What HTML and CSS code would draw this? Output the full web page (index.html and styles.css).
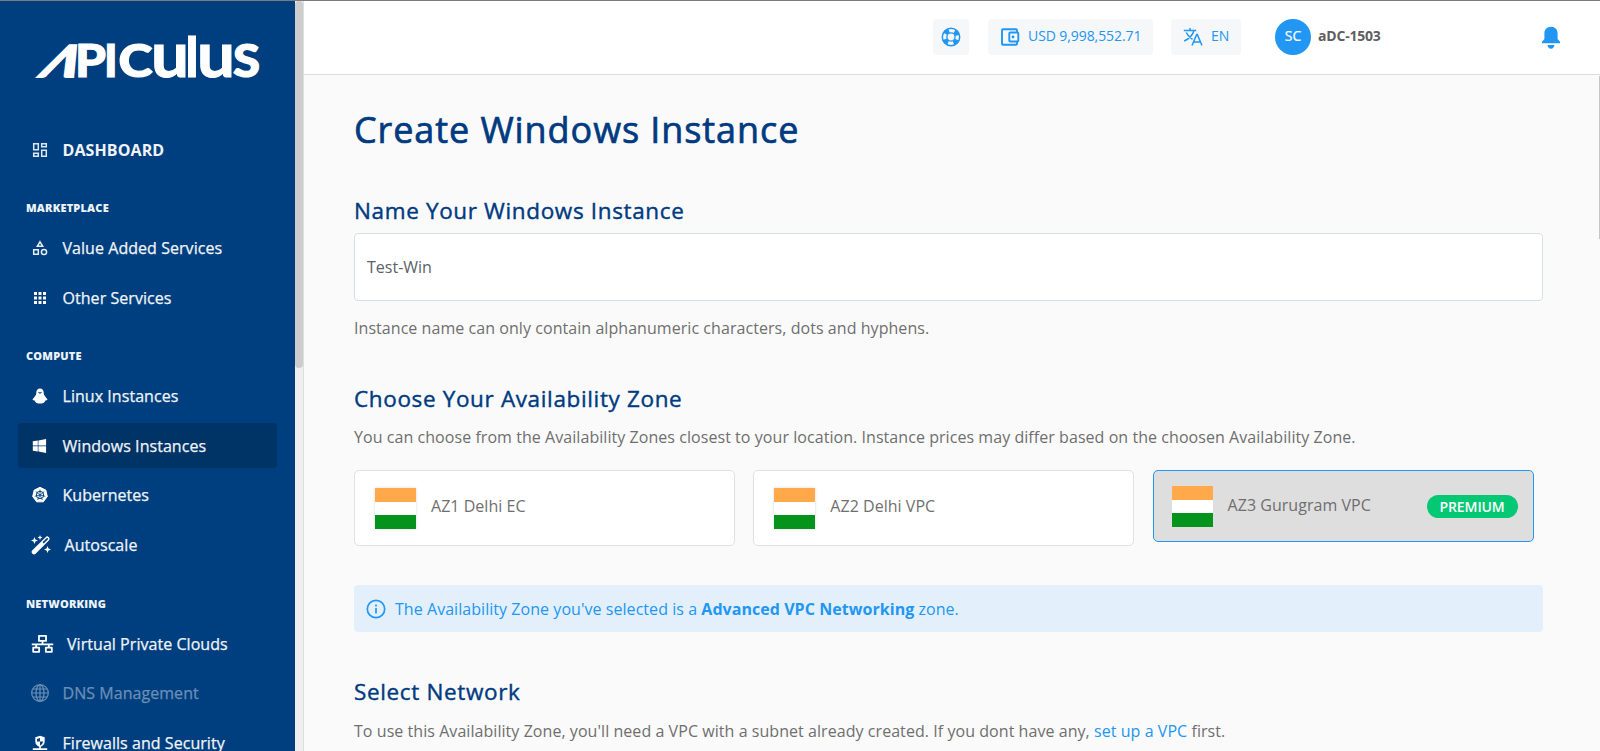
FILE: index.html
```html
<!DOCTYPE html>
<html lang="en">
<head>
<meta charset="utf-8">
<title>Create Windows Instance</title>
<link rel="stylesheet" href="styles.css">
</head>
<body>
<div class="app">
  <aside class="sidebar">
    <svg class="logo" viewBox="0 0 230 50" role="img" aria-label="Apiculus">
      <g fill="#fff" stroke="#fff" font-family="Lato, sans-serif">
        <text transform="translate(1.500 45.500) skewX(-29)" font-size="44" font-weight="900" stroke-width="1.800" textLength="35" lengthAdjust="spacingAndGlyphs">Λ</text>
        <text x="39" y="45.500" font-size="45" font-weight="900" stroke-width="1" textLength="31" lengthAdjust="spacingAndGlyphs">P</text>
        <text x="68" y="45.500" font-size="45" font-weight="900" stroke-width="1">I</text>
        <text x="82.500" y="45.500" font-size="45" font-weight="900" stroke-width="1.200" textLength="34" lengthAdjust="spacingAndGlyphs">C</text>
        <text x="115" y="45.500" font-size="63" font-weight="700" stroke-width="1" textLength="38" lengthAdjust="spacingAndGlyphs">u</text>
        <text x="149" y="45.500" font-size="56" font-weight="700" stroke-width="1">l</text>
        <text x="161" y="45.500" font-size="63" font-weight="700" stroke-width="1" textLength="38" lengthAdjust="spacingAndGlyphs">u</text>
        <text x="197" y="45.500" font-size="45" font-weight="900" stroke-width="1.200" textLength="27" lengthAdjust="spacingAndGlyphs">S</text>
      </g>
    </svg>
    <nav class="nav">
      <a class="item item-strong"><span class="ico"><svg width="16" height="16" viewBox="0 0 16 16" fill="none" stroke="#dfe8f2" stroke-width="1.5"><path d="M1.7 1.7h4.6v6H1.7zM9.7 1.7h4.6v3H9.7zM1.7 11.2h4.6v3H1.7zM9.7 8.2h4.6v6H9.7z"/></svg></span>DASHBOARD</a>
      <h4 class="group">MARKETPLACE</h4>
      <a class="item"><span class="ico"><svg width="16" height="16" viewBox="0 0 16 16" fill="none" stroke="#e6edf5" stroke-width="1.5"><path d="M8 1.8 10.7 6.300H5.300zM1.700 9.700h4.600v4.600H1.700z"/><circle cx="12" cy="12" r="2.600"/></svg></span>Value Added Services</a>
      <a class="item"><span class="ico"><svg width="16" height="16" viewBox="0 0 16 16" fill="#fff"><path d="M2 2h3v3H2zM6.500 2h3v3h-3zM11 2h3v3h-3zM2 6.500h3v3H2zM6.500 6.500h3v3h-3zM11 6.500h3v3h-3zM2 11h3v3H2zM6.500 11h3v3h-3zM11 11h3v3h-3z"/></svg></span>Other Services</a>
      <h4 class="group">COMPUTE</h4>
      <a class="item"><span class="ico"><svg width="16" height="16" viewBox="0 0 16 16"><path fill="#fff" d="M8 .5C5.700.5 4.300 2.200 4.300 4.500c0 2-.5 2.700-1.500 4L.7 11.200c-.5.700.2 1.100 1.500 1L3.500 14c.9 1.200 2.300 1.500 4.500 1.500s3.600-.3 4.500-1.500l1.300-1.800c1.300.1 2-.3 1.500-1l-2.100-2.700c-1-1.300-1.500-2-1.500-4C11.700 2.200 10.300.5 8 .5z"/><path fill="#003f7f" d="M5.800 4.200h4.400L8.700 5.600H7.300z"/></svg></span>Linux Instances</a>
      <a class="item item-active"><span class="ico"><svg width="16" height="16" viewBox="0 0 16 16" fill="#fff"><path d="M.8 3.300 5.800 2.500v5.100h-5zM6.400 2.400 14.100 1v6.600H6.400zM.8 8.300h5v5.200l-5-.8zM6.400 8.300h7.700V15l-7.700-1.400z"/></svg></span>Windows Instances</a>
      <a class="item"><span class="ico"><svg width="18" height="18" viewBox="0 0 18 18"><path fill="#fff" d="M9 1.300 14.800 4.100 16.300 10.500 12.300 15.800H5.700L1.700 10.500 3.200 4.100z" stroke="#fff" stroke-linejoin="round"/><g fill="none" stroke="#003f7f"><circle cx="9" cy="9" r="3.700"/><path stroke-width=".8" d="M9 3.500V9M4.700 5.600 9 9l4.300-3.400M3.700 10.300 9 9l5.300 1.300M6.600 14 9 9l2.400 5"/></g></svg></span>Kubernetes</a>
      <a class="item item-wand"><span class="ico"><svg width="20" height="20" viewBox="0 0 20 20"><path d="M3 17 16.200 3.800" stroke="#fff" stroke-width="4.600" stroke-linecap="round"/><path d="M12.600 7.400 16.200 3.800" stroke="#003f7f" stroke-width="1.700" stroke-linecap="round"/><path fill="#fff" d="M3.500 2 4.500 4.500 7 5.500 4.500 6.500 3.500 9 2.500 6.500 0 5.500 2.500 4.500zM9 0l.7 1.800 1.800.7-1.800.7L9 5l-.7-1.800-1.800-.7 1.800-.7zM16.500 11l1 2.500 2.500 1-2.500 1-1 2.500-1-2.500-2.500-1 2.500-1z"/></svg></span>Autoscale</a>
      <h4 class="group">NETWORKING</h4>
      <a class="item item-vpc"><span class="ico"><svg width="23" height="20" viewBox="0 0 24 20" fill="none" stroke="#fff" stroke-width="1.900" stroke-linejoin="round"><path d="M8.300 1.500h7.400v5.300H8.300zM2.300 13.700h6.200v4.500H2.300zM15.500 13.700h6.200v4.500h-6.200zM12 7v3.300M.8 10.300h22.400M5.400 10.500v3M18.600 10.500v3"/></svg></span>Virtual Private Clouds</a>
      <a class="item item-off"><span class="ico"><svg width="18" height="20" viewBox="0 0 18 20" fill="none" stroke="currentColor" stroke-width="1.200"><circle cx="9" cy="10" r="8.300"/><ellipse cx="9" cy="10" rx="4" ry="8.300"/><path d="M9 1.700v16.600M.7 10h16.600M1.700 6h14.600M1.700 14h14.600"/></svg></span>DNS Management</a>
      <a class="item"><span class="ico"><svg width="16" height="20" viewBox="0 0 16 20"><path fill="#fff" d="M8 2.800 12.700 4.200v4.300c0 3-2 4.600-4.700 5.700-2.700-1.100-4.700-2.700-4.700-5.700V4.200zM7.200 14h1.600v1.200h6.400v1.800H.8v-1.800h6.400z"/><path fill="#003f7f" d="M8 5v3.500h3c0 1.800-1.300 3-3 3.900V8.500H5V6z"/></svg></span>Firewalls and Security</a>
    </nav>
  </aside>
  <div class="scroll"><div class="thumb"></div></div>
  <section class="page">
    <header class="top">
      <div class="chip chip-help"><svg width="20" height="20" viewBox="0 0 20 20" fill="none" stroke="#2196f3"><circle cx="10" cy="10" r="8.700" stroke-width="1.500"/><circle cx="10" cy="10" r="6.500" stroke-width="4.500" stroke-dasharray="4.600 5.610" stroke-dashoffset="-2.800"/><circle cx="10" cy="10" r="4.100" stroke-width="1.300"/></svg></div>
      <div class="chip chip-wallet"><svg width="20" height="20" viewBox="0 0 20 20" fill="none" stroke="#2196f3" stroke-width="1.900" stroke-linejoin="round"><path d="M17 5V3.200a1 1 0 0 0-1-1H3a1 1 0 0 0-1 1v13.600a1 1 0 0 0 1 1h13a1 1 0 0 0 1-1V15"/><rect x="9.300" y="5.500" width="9" height="9" rx=".8"/><circle cx="13" cy="10" r="1.400" fill="#2196f3" stroke="none"/></svg><span>USD 9,998,552.71</span></div>
      <div class="chip chip-lang"><svg width="20" height="20" viewBox="0 0 20 20" fill="none" stroke="#2196f3" stroke-width="1.500"><path d="M.8 3.500h12.400M7 1v2.500M11 3.500C9.800 8 6 11.800 1.200 14M3.200 5.500C4.500 8.500 7 10.500 9.500 12.300M9 18.500l4.700-11h.6l4.700 11M10.700 14.900h6.600"/></svg><span>EN</span></div>
      <div class="avatar">SC</div>
      <div class="user">aDC-1503</div>
      <svg class="bell" width="20" height="24" viewBox="0 0 20 24" fill="#2196f3"><path d="M10 .8c4 0 6.600 2.800 6.600 6.700v5.600L19 15.800v1.400H1v-1.400l2.400-2.700V7.500C3.400 3.600 6 .8 10 .8zM6.600 19h6.800c0 2-1.300 3.700-3.400 3.700S6.600 21 6.600 19z"/></svg>
    </header>
    <main class="main">
      <h1>Create Windows Instance</h1>
      <h2 class="h-name">Name Your Windows Instance</h2>
      <div class="input">Test-Win</div>
      <p class="hint">Instance name can only contain alphanumeric characters, dots and hyphens.</p>
      <h2 class="h-zone">Choose Your Availability Zone</h2>
      <p class="desc">You can choose from the Availability Zones closest to your location. Instance prices may differ based on the choosen Availability Zone.</p>
      <div class="zones">
        <div class="zone"><div class="flag"></div><span>AZ1 Delhi EC</span></div>
        <div class="zone"><div class="flag"></div><span>AZ2 Delhi VPC</span></div>
        <div class="zone zone-on"><div class="flag"></div><span>AZ3 Gurugram VPC</span><b class="badge">PREMIUM</b></div>
      </div>
      <div class="alert"><svg width="20" height="20" viewBox="0 0 20 20" fill="none" stroke="#2196f3" stroke-width="1.700"><circle cx="10" cy="10" r="8.700"/><path d="M10 9v5.500M10 5.500v1.900"/></svg><span>The Availability Zone you've selected is a <b>Advanced VPC Networking</b> zone.</span></div>
      <h2 class="h-net">Select Network</h2>
      <p class="desc">To use this Availability Zone, you'll need a VPC with a subnet already created. If you dont have any, <a class="link">set up a VPC</a> first.</p>
    </main>
    <div class="page-thumb"></div>
  </section>
</div>
</body>
</html>
```
FILE: styles.css
```css
* { box-sizing: border-box; }
body {
  margin: 0;
  font-family: "Open Sans", sans-serif;
  font-size: 16px;
  color: #6f6f6f;
  background: #fafafa;
}
h1, h2, h4, p { margin: 0; }
svg { display: block; flex: none; }
.app {
  display: flex;
  height: 751px;
  overflow: hidden;
  border-top: 1px solid #7b7b7b;
}
.sidebar {
  width: 295px;
  flex: none;
  background: #003f7f;
  overflow: hidden;
}
.logo { width: 230px; height: 50px; margin: 30px 0 0 36px; overflow: visible; }
.nav { padding: 46px 18px 0; }
.item {
  display: flex;
  align-items: center;
  height: 45px;
  margin-bottom: 4.800px;
  padding-left: 13px;
  gap: 13.500px;
  border-radius: 4px;
  color: #f0f4f8;
  font-size: 16px;
  letter-spacing: .05px;
  -webkit-text-stroke: .25px currentColor;
  white-space: nowrap;
}
.ico { width: 18px; display: flex; justify-content: center; flex: none; }
.item-strong { font-weight: 700; letter-spacing: .1px; -webkit-text-stroke: 0; }
.item-active { background: #003366; }
.item-off { color: #6a8fb6; }
.item-wand .ico { width: 20px; }
.item-vpc .ico { width: 23px; }
.item-vpc { gap: 13px; }
.group {
  height: 18px;
  line-height: 18px;
  margin: 27.100px 0 8.200px 8px;
  color: #eef3f8;
  font-size: 11px;
  font-weight: 800;
  letter-spacing: .2px;
}
.scroll {
  width: 9px;
  flex: none;
  background: #efefef;
  border-right: 1px solid #dedede;
}
.thumb { height: 367px; width: 8px; background: #cdcdcd; border-radius: 4px; }
.page { flex: 1; position: relative; }
.page-thumb { position: absolute; right: 0; top: 75px; width: 1px; height: 163px; background: #c6c6c6; }
.top {
  height: 74px;
  display: flex;
  align-items: flex-start;
  padding: 18px 39px 0 629px;
  background: #fff;
  border-bottom: 1px solid #dcdcdc;
}
.chip {
  height: 36px;
  display: flex;
  align-items: center;
  border-radius: 4px;
  background: #f5f7f9;
  color: #2196f3;
  font-size: 14px;
  letter-spacing: -.08px;
  white-space: nowrap;
}
.chip span { margin-top: -3px; }
.chip-help { width: 36px; justify-content: center; }
.chip-wallet { width: 165px; margin-left: 19px; padding-left: 12px; gap: 8px; }
.chip-lang { width: 70px; margin-left: 18px; padding-left: 12px; gap: 8px; }
.avatar {
  width: 36px;
  height: 36px;
  line-height: 34px;
  margin-left: 34px;
  border-radius: 50%;
  background: #2196f3;
  color: #fff;
  font-size: 14px;
  -webkit-text-stroke: .2px #fff;
  text-align: center;
}
.user { margin-left: 7px; line-height: 34px; font-size: 14px; font-weight: 700; letter-spacing: -.2px; color: #5f5f5f; }
.bell { margin: 7px .5px 0 auto; }
.main { padding: 35px 57px 0 50px; }
h1, h2 { color: #003a80; font-weight: 400; white-space: nowrap; }
h1 { font-size: 36px; line-height: 40px; letter-spacing: .92px; -webkit-text-stroke: .7px #003a80; }
h2 { font-size: 22.500px; line-height: 30px; letter-spacing: .64px; -webkit-text-stroke: .4px #003a80; }
p { line-height: 24px; letter-spacing: .056px; white-space: nowrap; }
.h-name { margin-top: 46px; }
.input {
  height: 68px;
  margin-top: 7px;
  padding-left: 12px;
  line-height: 66px;
  background: #fff;
  border: 1px solid #d9dee3;
  border-radius: 4px;
  color: #5b6268;
}
.hint { margin-top: 15px; }
.h-zone { margin-top: 44px; }
.desc { margin-top: 11px; }
.zones { display: grid; grid-template-columns: repeat(3, 381px); column-gap: 18.300px; margin-top: 21px; height: 76px; }
.zone {
  display: flex;
  align-items: center;
  height: 76px;
  padding: 0 15px 0 20px;
  background: #fff;
  border: 1px solid #dfe1e3;
  border-radius: 5px;
}
.zone span { margin: -4px 0 0 15px; letter-spacing: .03px; }
.zone-on { height: 72px; padding-left: 18px; background: #dedede; border: 1px solid #2196f3; }
.flag {
  width: 41px;
  height: 41px;
  background: linear-gradient(#ffa94a 0 33.300%, #fff 33.300% 66.700%, #04931b 66.700%);
  box-shadow: 0 0 3px rgba(0, 0, 0, .15);
}
.zone-on .flag { box-shadow: none; }
.zone-on span { margin-top: -3px; }
.badge {
  margin-left: auto;
  width: 91px;
  height: 23px;
  line-height: 23px;
  border-radius: 12px;
  background: #05c875;
  color: #fff;
  font-size: 14px;
  font-weight: 600;
  letter-spacing: -.1px;
  text-align: center;
}
.alert {
  display: flex;
  align-items: center;
  height: 47px;
  margin-top: 39px;
  padding-left: 12px;
  gap: 9px;
  border-radius: 4px;
  background: #e3f0fb;
  color: #2196f3;
  letter-spacing: .05px;
}
.alert b { font-weight: 700; }
.h-net { margin-top: 45px; }
.h-net + .desc { margin-top: 12px; }
.link { color: #2196f3; }
```
